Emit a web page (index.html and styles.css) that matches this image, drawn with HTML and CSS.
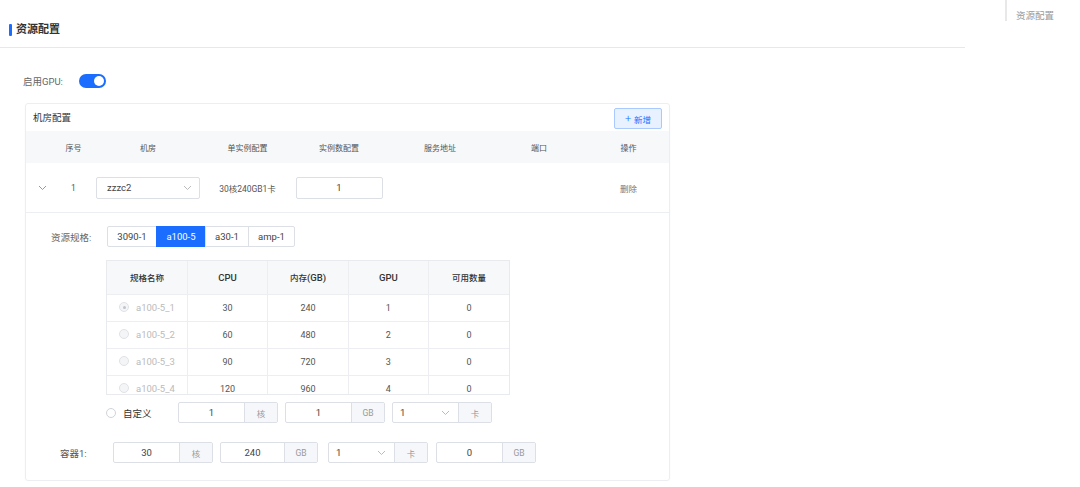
FILE: index.html
```html
<!DOCTYPE html>
<html lang="zh">
<head>
<meta charset="utf-8">
<link rel="stylesheet" href="styles.css">
</head>
<body>
<div class="page">
  <main class="main">
    <div class="section-head"><span class="bar"></span><span class="section-title">资源配置</span></div>
    <div class="gpu-row"><span class="gpu-label">启用GPU:</span><span class="switch"><span class="knob"></span></span></div>
    <div class="card">
      <div class="card-head"><span class="card-title">机房配置</span><button class="add-btn"><span class="plus">+</span>新增</button></div>
      <div class="grid thead">
        <span></span><span>序号</span><span>机房</span><span>单实例配置</span><span>实例数配置</span><span>服务地址</span><span>端口</span><span>操作</span>
      </div>
      <div class="grid trow">
        <span class="chev"><svg width="9" height="6" viewBox="0 0 9 6"><polyline points="1,1 4.5,4.5 8,1" fill="none" stroke="#999" stroke-width="1"/></svg></span>
        <span>1</span>
        <span><span class="select wide"><span>zzzc2</span><svg width="9" height="6" viewBox="0 0 9 6"><polyline points="1,1 4.5,4.5 8,1" fill="none" stroke="#bbb" stroke-width="1"/></svg></span></span>
        <span>30核240GB1卡</span>
        <span><span class="num-input">1</span></span>
        <span></span><span></span>
        <span class="del">删除</span>
      </div>
      <div class="expand">
        <div class="spec-row">
          <span class="spec-label">资源规格:</span>
          <div class="tabs"><span class="tab">3090-1</span><span class="tab active">a100-5</span><span class="tab">a30-1</span><span class="tab">amp-1</span></div>
        </div>
        <div class="inner-wrap">
          <table class="inner">
            <thead><tr><th>规格名称</th><th class="lat">CPU</th><th>内存<span class="lat">(GB)</span></th><th class="lat">GPU</th><th>可用数量</th></tr></thead>
            <tbody>
              <tr><td class="name"><span class="radio checked"></span>a100-5_1</td><td>30</td><td>240</td><td>1</td><td>0</td></tr>
              <tr><td class="name"><span class="radio"></span>a100-5_2</td><td>60</td><td>480</td><td>2</td><td>0</td></tr>
              <tr><td class="name"><span class="radio"></span>a100-5_3</td><td>90</td><td>720</td><td>3</td><td>0</td></tr>
              <tr><td class="name"><span class="radio"></span>a100-5_4</td><td>120</td><td>960</td><td>4</td><td>0</td></tr>
            </tbody>
          </table>
        </div>
        <div class="custom-row">
          <span class="radio plain"></span><span class="custom-label">自定义</span>
          <div class="groups">
            <span class="group"><span class="gin">1</span><span class="addon">核</span></span>
            <span class="group"><span class="gin">1</span><span class="addon">GB</span></span>
            <span class="group"><span class="gin sel"><span>1</span><svg width="9" height="6" viewBox="0 0 9 6"><polyline points="1,1 4.5,4.5 8,1" fill="none" stroke="#bbb" stroke-width="1"/></svg></span><span class="addon">卡</span></span>
          </div>
        </div>
        <div class="container-row">
          <span class="container-label">容器1:</span>
          <div class="groups">
            <span class="group"><span class="gin">30</span><span class="addon">核</span></span>
            <span class="group"><span class="gin">240</span><span class="addon">GB</span></span>
            <span class="group"><span class="gin sel"><span>1</span><svg width="9" height="6" viewBox="0 0 9 6"><polyline points="1,1 4.5,4.5 8,1" fill="none" stroke="#bbb" stroke-width="1"/></svg></span><span class="addon">卡</span></span>
            <span class="group"><span class="gin">0</span><span class="addon">GB</span></span>
          </div>
        </div>
      </div>
    </div>
  </main>
  <aside class="anchor"><span class="anchor-item">资源配置</span></aside>
</div>
</body>
</html>
```
FILE: styles.css
```css
* { box-sizing: border-box; }
html, body { margin: 0; padding: 0; background: #fff; }
body { font-family: Roboto, "Noto Sans CJK SC", sans-serif; color: #333; font-size: 9px; }
.page { display: flex; align-items: flex-start; }
.main { width: 965px; flex: none; }
.section-head { height: 48px; border-bottom: 1px solid #e6e8eb; display: flex; align-items: center; padding-left: 9px; padding-top: 12px; }
.bar { width: 3px; height: 12px; background: #1a6dff; border-radius: 1px; margin-right: 4px; }
.section-title { font-size: 11px; font-weight: 700; color: #333; line-height: 16px; }
.gpu-row { display: flex; align-items: center; padding-left: 23px; margin-top: 26px; height: 14px; }
.gpu-label { font-size: 9.5px; color: #666; width: 56px; }
.switch { width: 27px; height: 14px; background: #1a6dff; border-radius: 7px; position: relative; display: inline-block; }
.knob { position: absolute; right: 2px; top: 2px; width: 10px; height: 10px; background: #fff; border-radius: 50%; }
.card { margin: 15px 0 0 25px; width: 645px; border: 1px solid #eceef2; border-radius: 3px; padding-bottom: 17px; box-shadow: 0 1px 2px rgba(0,0,0,0.03); }
.card-head { height: 26px; display: flex; align-items: center; justify-content: space-between; padding: 0 7px 0 7px; }
.card-title { font-size: 9.5px; color: #333; }
.add-btn { height: 21px; width: 48px; border: 1px solid #a9c9ff; background: #e8f1ff; color: #1a6dff; border-radius: 2px; font-size: 8.5px; font-family: inherit; padding: 0; display: flex; align-items: center; justify-content: center; margin-top: 3px; }
.plus { font-size: 11px; margin-right: 3px; line-height: 1; font-weight: 300; }
.grid { display: grid; grid-template-columns: 32px 31px 118px 81px 102px 100px 98px 81px; align-items: center; justify-items: center; }
.thead { height: 32px; background: #f7f8fa; color: #555; font-size: 8px; margin-top: 1px; }
.trow { height: 50px; border-bottom: 1px solid #eceef2; color: #555; font-size: 8.5px; }
.chev { display: flex; }
.select { height: 22px; border: 1px solid #dcdfe6; border-radius: 2px; display: flex; align-items: center; justify-content: space-between; padding: 0 7px 0 10px; color: #444; font-size: 9.5px; }
.select.wide { width: 104px; }
.num-input { width: 87px; height: 22px; border: 1px solid #dcdfe6; border-radius: 2px; display: flex; align-items: center; justify-content: center; color: #444; font-size: 9.5px; }
.del { color: #777; font-size: 8.5px; }
.expand { padding-top: 13px; }
.spec-row { display: flex; align-items: center; padding-left: 25px; }
.spec-label { font-size: 9.5px; color: #666; width: 56px; }
.tabs { display: flex; height: 21px; }
.tab { display: flex; align-items: center; justify-content: center; border: 1px solid #dcdfe6; margin-left: -1px; height: 21px; color: #444; font-size: 9.5px; }
.tab:nth-child(1) { width: 50px; margin-left: 0; border-radius: 2px 0 0 2px; }
.tab:nth-child(2) { width: 50px; }
.tab:nth-child(3) { width: 44px; }
.tab:nth-child(4) { width: 47px; border-radius: 0 2px 2px 0; }
.tab.active { background: #1a6dff; border-color: #1a6dff; color: #fff; }
.inner-wrap { margin: 13px 0 0 80px; width: 404px; height: 135px; overflow: hidden; border: 1px solid #e8eaee; }
.inner { border-collapse: collapse; width: 402px; table-layout: fixed; }
.inner th { height: 33px; background: #f7f8fa; font-weight: 500; color: #333; font-size: 8.5px; border-right: 1px solid #eceef2; }
.inner th.lat, .inner th .lat { font-size: 9.5px; }
.inner td { height: 27px; text-align: center; color: #555; border-top: 1px solid #eceef2; border-right: 1px solid #eceef2; font-size: 9px; }
.inner th:last-child, .inner td:last-child { border-right: none; }
.inner td.name { text-align: left; padding-left: 12px; color: #bbb; font-size: 9.5px; }
.radio { display: inline-block; width: 10px; height: 10px; border-radius: 50%; border: 1px solid #e0e2e6; background: #f4f5f7; vertical-align: -1px; margin-right: 7px; position: relative; }
.radio.checked::after { content: ""; position: absolute; left: 2.5px; top: 2.5px; width: 3px; height: 3px; border-radius: 50%; background: #c0c4cc; }
.radio.plain { background: #fff; border-color: #d0d3d9; margin-right: 7px; }
.custom-row { display: flex; align-items: center; margin: 7px 0 0 80px; height: 21px; }
.custom-label { font-size: 9.5px; color: #333; width: 55px; }
.groups { display: flex; gap: 7px; }
.group { display: flex; height: 21px; border: 1px solid #dcdfe6; border-radius: 2px; width: 100px; overflow: hidden; }
.gin { flex: 1; display: flex; align-items: center; justify-content: center; color: #444; font-size: 9.5px; }
.gin.sel { justify-content: space-between; padding: 0 8px 0 7px; }
.addon { width: 33px; background: #f5f7fa; border-left: 1px solid #dcdfe6; display: flex; align-items: center; justify-content: center; color: #999; font-size: 8.5px; }
.container-row { display: flex; align-items: center; margin: 19px 0 0 34px; height: 21px; }
.container-label { font-size: 9.5px; color: #555; width: 53px; }
.container-row .group:nth-child(2) { width: 98px; }
.container-row .group:nth-child(3) { margin-left: 3px; }
.container-row .group:nth-child(4) { margin-left: 1px; }
.anchor { margin-left: 40px; border-left: 2px solid #e8e8e8; height: 21px; padding-left: 9px; display: flex; align-items: flex-end; }
.anchor-item { font-size: 9.5px; color: #999; line-height: 14px; margin-bottom: -2px; }
```
